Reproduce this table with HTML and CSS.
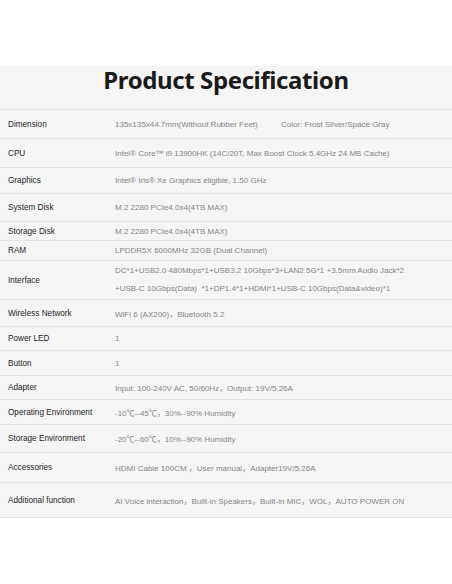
FILE: index.html
```html
<!DOCTYPE html>
<html>
<head>
<meta charset="utf-8">
<link rel="stylesheet" href="styles.css">
</head>
<body>
<div class="page">
  <section class="spec">
    <h1 class="title">Product Specification</h1>
    <div class="table">
      <div class="row h29"><div class="label">Dimension</div><div class="value"><span class="dim">135x135x44.7mm(Without Rubber Feet)</span><span>Color: Frost Silver/Space Gray</span></div></div>
      <div class="row h29"><div class="label">CPU</div><div class="value">Intel® Core™ i9 13900HK (14C/20T, Max Boost Clock 5.4GHz 24 MB Cache)</div></div>
      <div class="row h26"><div class="label">Graphics</div><div class="value">Intel® Iris® Xe Graphics eligible, 1.50 GHz</div></div>
      <div class="row h28"><div class="label">System Disk</div><div class="value">M.2 2280 PCIe4.0x4(4TB MAX)</div></div>
      <div class="row h18"><div class="label">Storage Disk</div><div class="value">M.2 2280 PCIe4.0x4(4TB MAX)</div></div>
      <div class="row h20"><div class="label">RAM</div><div class="value">LPDDR5X 6000MHz 32GB (Dual Channel)</div></div>
      <div class="row h39"><div class="label">Interface</div><div class="value multi">DC*1+USB2.0 480Mbps*1+USB3.2 10Gbps*3+LAN2.5G*1 +3.5mm Audio Jack*2<br>+USB-C 10Gbps(Data) &nbsp;*1+DP1.4*1+HDMI*1+USB-C 10Gbps(Data&amp;video)*1</div></div>
      <div class="row h27"><div class="label">Wireless Network</div><div class="value">WiFi 6 (AX200)，Bluetooth 5.2</div></div>
      <div class="row h24"><div class="label">Power LED</div><div class="value">1</div></div>
      <div class="row h25"><div class="label">Button</div><div class="value">1</div></div>
      <div class="row h24"><div class="label">Adapter</div><div class="value">Input: 100-240V AC, 50/60Hz，Output: 19V/5.26A</div></div>
      <div class="row h25"><div class="label">Operating Environment</div><div class="value">-10℃--45℃，30%--90% Humidity</div></div>
      <div class="row h28"><div class="label">Storage Environment</div><div class="value">-20℃--60℃，10%--90% Humidity</div></div>
      <div class="row h30"><div class="label">Accessories</div><div class="value">HDMI Cable 100CM ，User manual，Adapter19V/5.26A</div></div>
      <div class="row h35"><div class="label">Additional function</div><div class="value">AI Voice interaction，Built-in Speakers，Built-in MIC，WOL，AUTO POWER ON</div></div>
    </div>
  </section>
</div>
</body>
</html>
```

FILE: styles.css
```css
html, body {
  margin: 0;
  padding: 0;
  background: #ffffff;
}
.page {
  padding-top: 66px;
  font-family: "Liberation Sans", Arial, "Noto Sans CJK SC", sans-serif;
}
.spec {
  background: #f5f5f5;
}
.title {
  margin: 0;
  height: 43px;
  font-family: "Noto Sans", "Liberation Sans", sans-serif;
  font-weight: 700;
  font-size: 24px;
  letter-spacing: -0.4px;
  line-height: 27px;
  color: #1a1a1a;
  text-align: center;
  border-bottom: 1px solid #e2e2e2;
}
.row {
  display: flex;
  align-items: center;
  border-bottom: 1px solid #e2e2e2;
  box-sizing: border-box;
}
.h18 { height: 19px; }
.h20 { height: 20px; }
.h24 { height: 24px; }
.h25 { height: 25px; }
.h26 { height: 26px; }
.h27 { height: 27px; }
.h28 { height: 28px; }
.h29 { height: 29px; }
.h30 { height: 30px; }
.h35 { height: 35px; }
.h39 { height: 39px; }
.label {
  width: 107px;
  padding-left: 8px;
  flex: none;
  font-size: 8.2px;
  color: #262626;
}
.value {
  font-size: 8px;
  color: #868686;
  white-space: nowrap;
}
.value.multi {
  line-height: 18px;
}
.dim {
  display: inline-block;
  width: 166px;
}
```
